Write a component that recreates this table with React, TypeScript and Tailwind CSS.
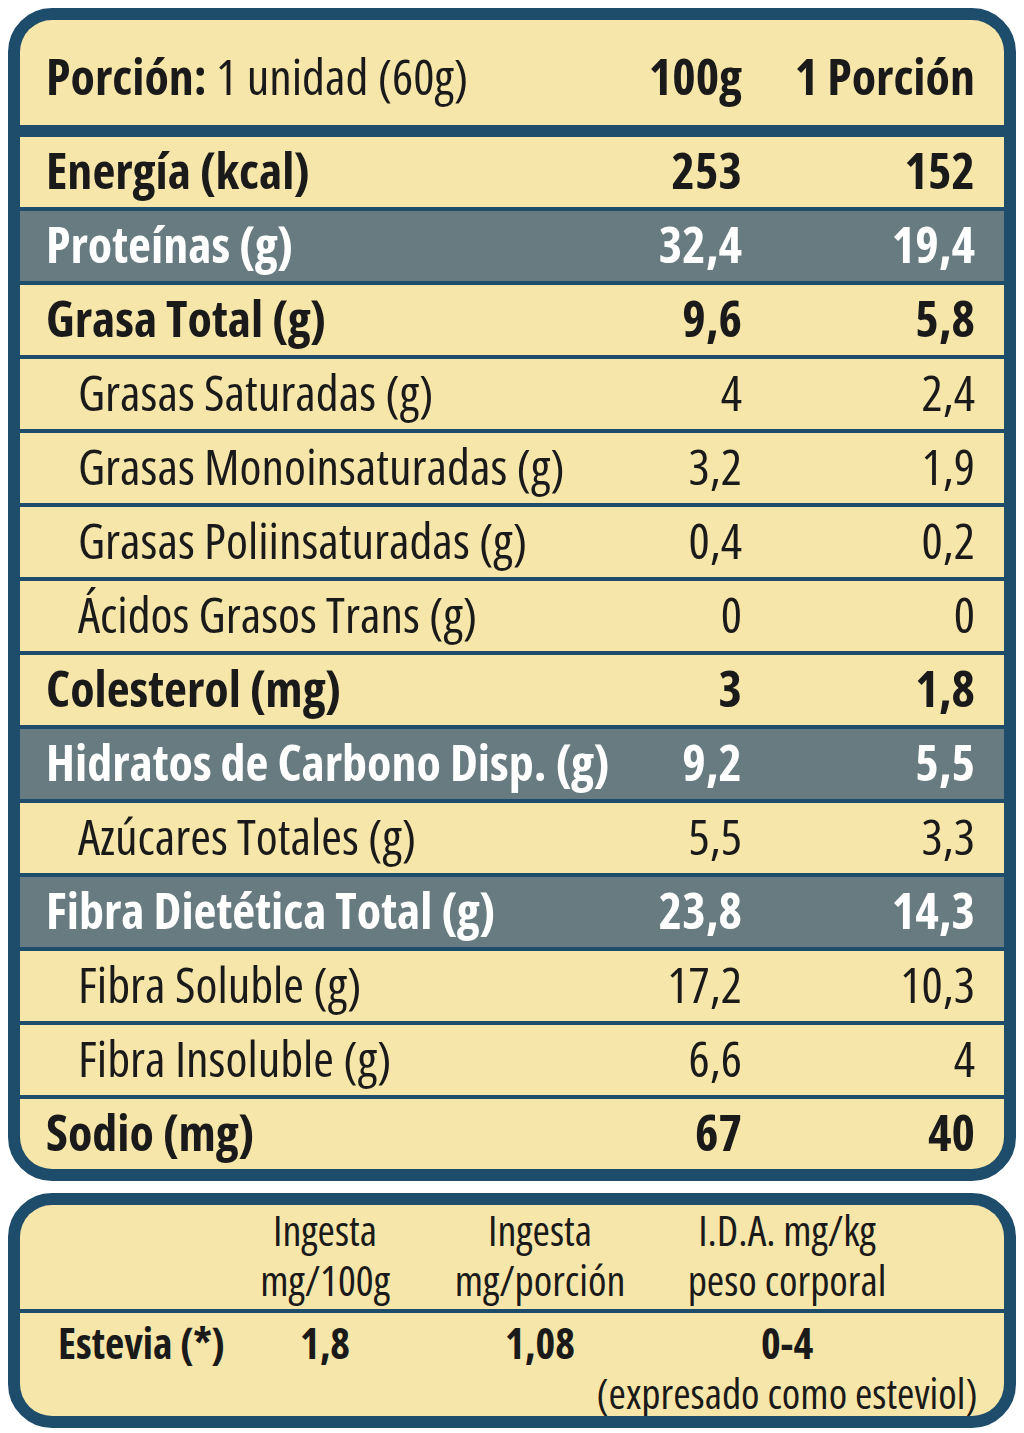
import React from 'react';

type Row = {
  label: string;
  per100: string;
  perPortion: string;
  kind: 'bold' | 'sub' | 'dark';
};

const rows: Row[] = [
  { label: 'Energía (kcal)', per100: '253', perPortion: '152', kind: 'bold' },
  { label: 'Proteínas (g)', per100: '32,4', perPortion: '19,4', kind: 'dark' },
  { label: 'Grasa Total (g)', per100: '9,6', perPortion: '5,8', kind: 'bold' },
  { label: 'Grasas Saturadas (g)', per100: '4', perPortion: '2,4', kind: 'sub' },
  { label: 'Grasas Monoinsaturadas (g)', per100: '3,2', perPortion: '1,9', kind: 'sub' },
  { label: 'Grasas Poliinsaturadas (g)', per100: '0,4', perPortion: '0,2', kind: 'sub' },
  { label: 'Ácidos Grasos Trans (g)', per100: '0', perPortion: '0', kind: 'sub' },
  { label: 'Colesterol (mg)', per100: '3', perPortion: '1,8', kind: 'bold' },
  { label: 'Hidratos de Carbono Disp. (g)', per100: '9,2', perPortion: '5,5', kind: 'dark' },
  { label: 'Azúcares Totales (g)', per100: '5,5', perPortion: '3,3', kind: 'sub' },
  { label: 'Fibra Dietética Total (g)', per100: '23,8', perPortion: '14,3', kind: 'dark' },
  { label: 'Fibra Soluble (g)', per100: '17,2', perPortion: '10,3', kind: 'sub' },
  { label: 'Fibra Insoluble (g)', per100: '6,6', perPortion: '4', kind: 'sub' },
  { label: 'Sodio (mg)', per100: '67', perPortion: '40', kind: 'bold' },
];

const rowStyle: Record<Row['kind'], string> = {
  bold: 'bg-[#f6e6a9] text-[#1a1a1a] font-bold',
  dark: 'bg-[#677b80] text-white font-bold',
  sub: 'bg-[#f6e6a9] text-[#1a1a1a] font-normal',
};

export default function App() {
  return (
    <div className="w-[1024px] h-[1433px] bg-white pt-[8px] pl-[8px] font-['Open_Sans',sans-serif] font-stretch-condensed leading-none">
      {/* Main nutrition table */}
      <div className="w-[1008px] rounded-[44px] border-[12px] border-[#1e4c6b] bg-[#1e4c6b] overflow-hidden">
        <div className="grid grid-cols-[minmax(0,1fr)_160px_233px] items-center h-[105px] bg-[#f6e6a9] pl-[26px] pr-[29px] pt-[6px] text-[50px] text-[#1a1a1a] whitespace-nowrap">
          <div>
            <span className="font-bold">Porción:</span> 1 unidad (60g)
          </div>
          <div className="text-right font-bold">100g</div>
          <div className="text-right font-bold">1 Porción</div>
        </div>
        <div className="flex flex-col gap-[4px] mt-[12px]">
          {rows.map((r, i) => (
            <div
              key={i}
              className={`grid grid-cols-[minmax(0,1fr)_160px_233px] items-center h-[70px] pr-[29px] pb-[5px] text-[50px] whitespace-nowrap ${rowStyle[r.kind]} ${
                r.kind === 'sub' ? 'pl-[58px]' : 'pl-[26px]'
              }`}
            >
              <div>{r.label}</div>
              <div className="text-right">{r.per100}</div>
              <div className="text-right">{r.perPortion}</div>
            </div>
          ))}
        </div>
      </div>

      {/* Sweetener table */}
      <div className="w-[1008px] mt-[12px] rounded-[44px] border-[12px] border-[#1e4c6b] bg-[#1e4c6b] overflow-hidden text-[42px] text-[#1a1a1a] leading-[50px] whitespace-nowrap">
        <div className="grid grid-cols-[210px_190px_240px_254px_1fr] items-center h-[104px] bg-[#f6e6a9] pb-[4px]">
          <div />
          <div className="flex flex-col items-center">
            <span>Ingesta</span>
            <span>mg/100g</span>
          </div>
          <div className="flex flex-col items-center">
            <span>Ingesta</span>
            <span>mg/porción</span>
          </div>
          <div className="flex flex-col items-center">
            <span>I.D.A. mg/kg</span>
            <span>peso corporal</span>
          </div>
          <div />
        </div>
        <div className="grid grid-cols-[210px_190px_240px_254px_1fr] items-start h-[103px] mt-[4px] bg-[#f6e6a9] pt-[5px]">
          <div className="pl-[38px] font-bold">Estevia (*)</div>
          <div className="text-center font-bold">1,8</div>
          <div className="text-center font-bold">1,08</div>
          <div className="flex flex-col items-center">
            <span className="font-bold">0-4</span>
            <span>(expresado como esteviol)</span>
          </div>
          <div />
        </div>
      </div>
    </div>
  );
}
